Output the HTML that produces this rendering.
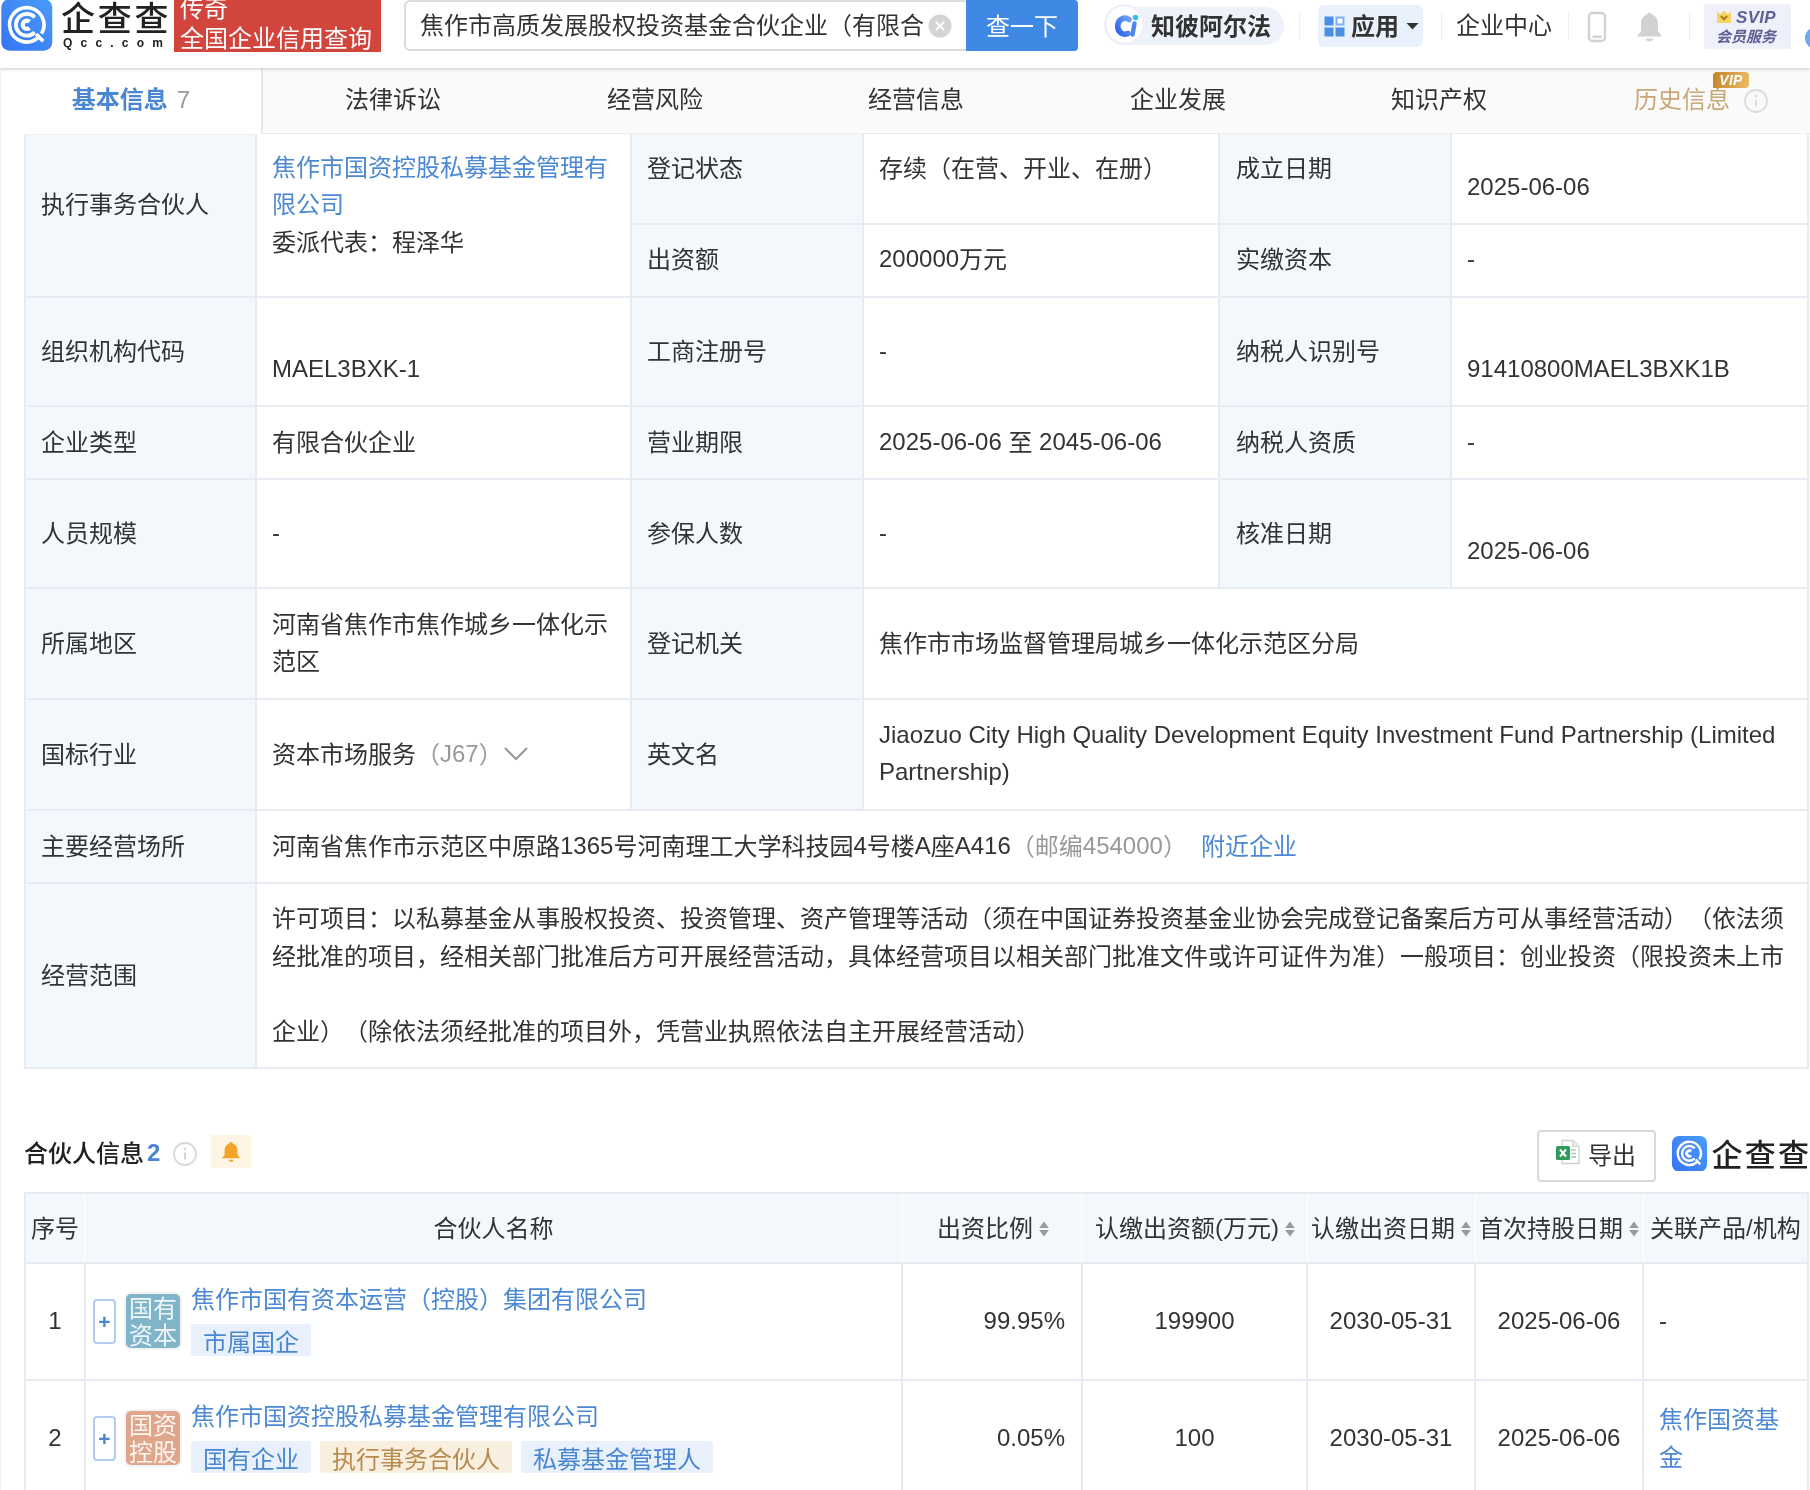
<!DOCTYPE html>
<html lang="zh-CN">
<head>
<meta charset="utf-8">
<title>企查查</title>
<style>
*{box-sizing:border-box;margin:0;padding:0}
html,body{width:1810px;height:1490px;overflow:hidden;background:#fff}
body{position:relative;will-change:transform;text-spacing-trim:space-all;font-family:"Liberation Sans","Noto Sans CJK SC",sans-serif;font-size:24px;color:#333;line-height:38px}
.abs{position:absolute}
a{color:#4c88d3;text-decoration:none}
.blue{color:#4a85d0}
.gray{color:#999}
/* main table cells */
.c{position:absolute;display:flex;align-items:center;padding-left:15px;border-right:2px solid #e3edf5;border-bottom:2px solid #e3edf5;white-space:nowrap}
.l{background:#f2f8fd}
.v{background:#fff}
#t1{position:absolute;left:0;top:0}
.lb{position:absolute;background:#f3f8fd}
.ln{position:absolute;background:#e8ecf2}
.t{position:absolute;white-space:nowrap;font-size:24px;line-height:38px;color:#333}
.tab{position:absolute;top:13px;width:262px;text-align:center;font-size:24px;line-height:38px;color:#333;white-space:nowrap}
.e{position:relative;top:-1px}
</style>
</head>
<body>
<!-- HEADER -->
<div id="hdr" class="abs" style="left:0;top:0;width:1810px;height:68px;background:#fff;box-shadow:0 1px 3px rgba(0,0,0,.22);z-index:5;overflow:hidden">
  <!-- logo icon -->
  <svg class="abs" style="left:1px;top:0px" width="52" height="52" viewBox="0 0 52 52">
    <defs><linearGradient id="lg1" x1="0" y1="1" x2="1" y2="0"><stop offset="0" stop-color="#3574f5"/><stop offset="1" stop-color="#4a9cf8"/></linearGradient></defs>
    <rect x="0.300" y="-1" width="51" height="51.700" rx="8.500" fill="url(#lg1)"/>
    <path d="M40.54 33.66 A17.2 17.2 0 1 0 36.86 37.98" fill="none" stroke="#fff" stroke-width="3.600"/>
    <path d="M33.77 17.37 A10.9 10.9 0 1 0 33.64 32.37" fill="none" stroke="#fff" stroke-width="3.800"/>
    <path d="M28.54 21.75 A4.1 4.1 0 1 0 28.54 27.85" fill="none" stroke="#fff" stroke-width="4.200"/>
    <path d="M35.13 34.13 L42.20 41.20" stroke="#fff" stroke-width="3.600"/>
  </svg>
  <div class="abs" style="left:61px;top:-5px;font-size:34px;line-height:48px;font-weight:500;color:#222;letter-spacing:2.800px;white-space:nowrap">企查查</div>
  <div class="abs" style="left:63px;top:34px;font-size:12px;line-height:18px;font-weight:700;color:#222;letter-spacing:8.200px;white-space:nowrap">Qcc.com</div>
  <div class="abs" style="left:174px;top:0;width:207px;height:52px;background:#d1453d"></div>
  <div class="abs" style="left:180px;top:-10px;font-size:24px;line-height:38px;color:#fff;white-space:nowrap">传奇</div>
  <div class="abs" style="left:180px;top:19.500px;font-size:24px;line-height:38px;color:#fff;white-space:nowrap">全国企业信用查询</div>
  <!-- search -->
  <div class="abs" style="left:404px;top:0px;width:566px;height:51px;border:2px solid #dcdcdc;border-radius:6px;background:#fff"></div>
  <div class="abs" style="left:420px;top:7px;font-size:24px;line-height:38px;color:#333;white-space:nowrap">焦作市高质发展股权投资基金合伙企业（有限合</div>
  <svg class="abs" style="left:928px;top:14px" width="24" height="24" viewBox="0 0 24 24"><circle cx="12" cy="12" r="11.5" fill="#d4d4d4"/><path d="M8 8 L16 16 M16 8 L8 16" stroke="#fff" stroke-width="2"/></svg>
  <div class="abs" style="left:966px;top:0;width:112px;height:51px;background:#3f88e3;border-radius:0 4px 4px 0;color:#fff;font-size:24px;line-height:54px;text-align:center">查一下</div>
  <!-- alpha pill -->
  <div class="abs" style="left:1106px;top:7px;width:178px;height:38px;border-radius:19px;background:#edf2fb"></div>
  <svg class="abs" style="left:1104px;top:3px" width="44" height="46" viewBox="0 0 44 46">
    <defs><linearGradient id="lg2" x1="0" y1="1" x2="1" y2="0"><stop offset="0" stop-color="#2d62e6"/><stop offset="1" stop-color="#6fa2f5"/></linearGradient></defs>
    <circle cx="20.500" cy="21.600" r="19.300" fill="#fff" stroke="#f1effa" stroke-width="2.600"/>
    <path d="M25 16.500 A7.300 8 0 1 0 24 30.500" fill="none" stroke="url(#lg2)" stroke-width="5.600" stroke-linecap="round"/>
    <path d="M30.500 20.500 L28.500 31.500" stroke="#4d86ef" stroke-width="4.400" stroke-linecap="round"/>
    <circle cx="31.500" cy="14.500" r="2.800" fill="#35c4e8"/>
  </svg>
  <div class="abs" style="left:1151px;top:7.500px;font-size:24px;line-height:38px;font-weight:700;color:#333;white-space:nowrap">知彼阿尔法</div>
  <div class="abs" style="left:1299px;top:12px;width:1px;height:28px;background:#eee"></div>
  <!-- apps -->
  <div class="abs" style="left:1318px;top:5px;width:105px;height:42px;border-radius:6px;background:#e9f1fc"></div>
  <svg class="abs" style="left:1324px;top:16px" width="22" height="21" viewBox="0 0 22 21"><rect x="0.5" y="0.5" width="9" height="9" fill="#4a8fe6"/><rect x="12.5" y="1.5" width="7" height="7" fill="#fff" stroke="#7fb0ee" stroke-width="2"/><rect x="0.5" y="11.5" width="9" height="9" fill="#4a8fe6"/><rect x="11.5" y="11.5" width="9" height="9" fill="#4a8fe6"/></svg>
  <div class="abs" style="left:1351px;top:7.500px;font-size:24px;line-height:38px;font-weight:700;color:#333;white-space:nowrap">应用</div>
  <svg class="abs" style="left:1406px;top:23px" width="13" height="7" viewBox="0 0 13 7"><path d="M0.5 0 L12.5 0 L6.5 6.5 Z" fill="#333"/></svg>
  <div class="abs" style="left:1441px;top:12px;width:1px;height:28px;background:#eee"></div>
  <div class="abs" style="left:1456px;top:7px;font-size:24px;line-height:38px;color:#333;white-space:nowrap">企业中心</div>
  <div class="abs" style="left:1568px;top:12px;width:1px;height:28px;background:#eee"></div>
  <!-- phone -->
  <svg class="abs" style="left:1587px;top:11px" width="20" height="32" viewBox="0 0 20 32"><rect x="2" y="2" width="16" height="28" rx="3.5" fill="none" stroke="#d2d2d2" stroke-width="2.4"/><rect x="5.500" y="24.500" width="9" height="2.600" fill="#d2d2d2"/></svg>
  <!-- bell -->
  <svg class="abs" style="left:1636px;top:11px" width="27" height="32" viewBox="0 0 27 32"><path d="M13.5 1.5 C15 1.5 15.8 2.5 15.8 3.6 C20 5 22 8.5 22 13 L22 20 L26 25.5 L1 25.5 L5 20 L5 13 C5 8.5 7 5 11.2 3.6 C11.2 2.5 12 1.5 13.5 1.5 Z" fill="#d2d2d2"/><path d="M10 27.5 L17 27.5 C17 29.5 15.5 30.5 13.5 30.5 C11.5 30.5 10 29.5 10 27.5 Z" fill="#d2d2d2"/></svg>
  <div class="abs" style="left:1689px;top:12px;width:1px;height:28px;background:#eee"></div>
  <!-- svip -->
  <div class="abs" style="left:1704px;top:4px;width:87px;height:45px;background:#eef1fa;border-radius:2px"></div>
  <svg class="abs" style="left:1716px;top:10px" width="16" height="14" viewBox="0 0 16 14"><path d="M1 2 L4.5 4 L8 0.5 L11.5 4 L15 2 L15 13 L1 13 Z" fill="#f6d662"/><path d="M4.8 6 L8 9.3 L11.2 6" fill="none" stroke="#b07a14" stroke-width="2"/></svg>
  <div class="abs" style="left:1736px;top:8px;font-size:17px;line-height:20px;font-weight:700;font-style:italic;color:#5d6193;white-space:nowrap;letter-spacing:0.3px">SVIP</div>
  <div class="abs" style="left:1716px;top:27px;font-size:15px;line-height:20px;font-weight:700;font-style:italic;color:#5d6193;white-space:nowrap">会员服务</div>
  <div class="abs" style="left:1805px;top:27px;width:22px;height:22px;border-radius:11px;background:#6ea8f2"></div>
</div>
<!-- TABS -->
<div id="tabs" class="abs" style="left:0;top:68px;width:1810px;height:66px;background:linear-gradient(#fafafa 0,#fafafa 64px,#fff 64px,#fff 65px,#ebebeb 65px)">
  <div class="abs" style="left:0;top:0;width:263px;height:66px;background:#fff;border-right:2px solid #e9e9e9"></div>
  <div class="tab" style="left:0;font-weight:700;color:#4a86d2">基本信息<span style="font-weight:400;color:#999;margin-left:9px">7</span></div>
  <div class="tab" style="left:262px">法律诉讼</div>
  <div class="tab" style="left:524px">经营风险</div>
  <div class="tab" style="left:785px">经营信息</div>
  <div class="tab" style="left:1047px">企业发展</div>
  <div class="tab" style="left:1308px">知识产权</div>
  <div class="tab" style="left:1551px;color:#c9a876">历史信息</div>
  <div class="abs" style="left:1713px;top:4px;width:36px;height:16px;border-radius:4px 4px 4px 0;background:linear-gradient(100deg,#c4852a,#ecbb62);color:#fff;font-size:14px;line-height:16px;font-weight:700;font-style:italic;text-align:center;letter-spacing:.3px">VIP</div>
  <svg class="abs" style="left:1743px;top:20px" width="26" height="26" viewBox="0 0 26 26"><circle cx="13" cy="13" r="11" fill="none" stroke="#dcdcdc" stroke-width="1.8"/><circle cx="13" cy="8" r="1.3" fill="#dcdcdc"/><path d="M13 11.5 L13 18.5" stroke="#dcdcdc" stroke-width="1.8"/></svg>
</div>
<div class="abs" style="left:0;top:69px;width:1px;height:1421px;background:#f3f3f3"></div>
<!-- TABLE 1 -->
<div id="t1">
<div class="lb" style="left:24px;top:134px;width:231px;height:935px"></div>
<div class="lb" style="left:630px;top:134px;width:232px;height:675px"></div>
<div class="lb" style="left:1218px;top:134px;width:232px;height:453px"></div>
<div class="ln" style="left:24px;top:134px;width:233px;height:1px;opacity:.7"></div>
<div class="ln" style="left:24px;top:296px;width:1785px;height:2px"></div>
<div class="ln" style="left:24px;top:405px;width:1785px;height:2px"></div>
<div class="ln" style="left:24px;top:478px;width:1785px;height:2px"></div>
<div class="ln" style="left:24px;top:587px;width:1785px;height:2px"></div>
<div class="ln" style="left:24px;top:698px;width:1785px;height:2px"></div>
<div class="ln" style="left:24px;top:809px;width:1785px;height:2px"></div>
<div class="ln" style="left:24px;top:882px;width:1785px;height:2px"></div>
<div class="ln" style="left:24px;top:1067px;width:1785px;height:2px"></div>
<div class="ln" style="left:632px;top:223px;width:1177px;height:2px"></div>
<div class="ln" style="left:24px;top:134px;width:2px;height:935px"></div>
<div class="ln" style="left:1807px;top:134px;width:2px;height:935px"></div>
<div class="ln" style="left:255px;top:134px;width:2px;height:935px"></div>
<div class="ln" style="left:630px;top:134px;width:2px;height:675px"></div>
<div class="ln" style="left:862px;top:134px;width:2px;height:675px"></div>
<div class="ln" style="left:1218px;top:134px;width:2px;height:453px"></div>
<div class="ln" style="left:1450px;top:134px;width:2px;height:453px"></div>
<div class="t" style="left:41px;top:186px">执行事务合伙人</div>
<div class="t" style="left:272px;top:149px"><a>焦作市国资控股私募基金管理有</a></div>
<div class="t" style="left:272px;top:186px"><a>限公司</a></div>
<div class="t" style="left:272px;top:224px">委派代表：程泽华</div>
<div class="t" style="left:647px;top:150px">登记状态</div>
<div class="t" style="left:879px;top:150px">存续（在营、开业、在册）</div>
<div class="t" style="left:1236px;top:150px">成立日期</div>
<div class="t" style="left:1467px;top:168px">2025-06-06</div>
<div class="t" style="left:647px;top:241px">出资额</div>
<div class="t" style="left:879px;top:241px"><span class="e">200000</span>万元</div>
<div class="t" style="left:1236px;top:241px">实缴资本</div>
<div class="t" style="left:1467px;top:240px">-</div>
<div class="t" style="left:41px;top:333px">组织机构代码</div>
<div class="t" style="left:272px;top:350px">MAEL3BXK-1</div>
<div class="t" style="left:647px;top:333px">工商注册号</div>
<div class="t" style="left:879px;top:332px">-</div>
<div class="t" style="left:1236px;top:333px">纳税人识别号</div>
<div class="t" style="left:1467px;top:350px">91410800MAEL3BXK1B</div>
<div class="t" style="left:41px;top:424px">企业类型</div>
<div class="t" style="left:272px;top:424px">有限合伙企业</div>
<div class="t" style="left:647px;top:424px">营业期限</div>
<div class="t" style="left:879px;top:424px"><span class="e">2025-06-06</span> 至 <span class="e">2045-06-06</span></div>
<div class="t" style="left:1236px;top:424px">纳税人资质</div>
<div class="t" style="left:1467px;top:423px">-</div>
<div class="t" style="left:41px;top:515px">人员规模</div>
<div class="t" style="left:272px;top:514px">-</div>
<div class="t" style="left:647px;top:515px">参保人数</div>
<div class="t" style="left:879px;top:514px">-</div>
<div class="t" style="left:1236px;top:515px">核准日期</div>
<div class="t" style="left:1467px;top:532px">2025-06-06</div>
<div class="t" style="left:41px;top:625px">所属地区</div>
<div class="t" style="left:272px;top:606px">河南省焦作市焦作城乡一体化示</div>
<div class="t" style="left:272px;top:643px">范区</div>
<div class="t" style="left:647px;top:625px">登记机关</div>
<div class="t" style="left:879px;top:625px">焦作市市场监督管理局城乡一体化示范区分局</div>
<div class="t" style="left:41px;top:736px">国标行业</div>
<div class="t" style="left:272px;top:736px">资本市场服务<span class="gray">（<span class="e">J67</span>）</span></div>
<div class="t" style="left:647px;top:736px">英文名</div>
<div class="t" style="left:879px;top:716px">Jiaozuo City High Quality Development Equity Investment Fund Partnership (Limited</div>
<div class="t" style="left:879px;top:753px">Partnership)</div>
<div class="t" style="left:41px;top:828px">主要经营场所</div>
<div class="t" style="left:272px;top:828px">河南省焦作市示范区中原路<span class="e">1365</span>号河南理工大学科技园<span class="e">4</span>号楼<span class="e">A</span>座<span class="e">A416</span><span class="gray">（邮编<span class="e">454000</span>）</span><a style="margin-left:14px">附近企业</a></div>
<div class="t" style="left:41px;top:957px">经营范围</div>
<div class="t" style="left:272px;top:900px">许可项目：以私募基金从事股权投资、投资管理、资产管理等活动（须在中国证券投资基金业协会完成登记备案后方可从事经营活动）（依法须</div>
<div class="t" style="left:272px;top:938px">经批准的项目，经相关部门批准后方可开展经营活动，具体经营项目以相关部门批准文件或许可证件为准）一般项目：创业投资（限投资未上市</div>
<div class="t" style="left:272px;top:1013px">企业）（除依法须经批准的项目外，凭营业执照依法自主开展经营活动）</div>
<svg class="abs" style="left:503px;top:746px" width="26" height="16" viewBox="0 0 26 16"><path d="M2 2 L13 13 L24 2" fill="none" stroke="#999" stroke-width="2.2"/></svg>
</div>
<!-- SECTION 2 -->
<div id="s2">
<div class="t" style="left:24px;top:1134.5px;font-weight:500;color:#222">合伙人信息<span class="e" style="color:#4a86d2;margin-left:3px;font-weight:700">2</span></div>
<svg class="abs" style="left:172px;top:1141px" width="26" height="26" viewBox="0 0 26 26"><circle cx="13" cy="13" r="11" fill="none" stroke="#d8d8d8" stroke-width="1.8"/><circle cx="13" cy="8" r="1.3" fill="#d0d0d0"/><path d="M13 11.5 L13 18.5" stroke="#d0d0d0" stroke-width="1.8"/></svg>
<div class="abs" style="left:211px;top:1135px;width:40px;height:33px;border-radius:1px;background:#fdf4e4"></div>
<svg class="abs" style="left:221px;top:1141px" width="20" height="22" viewBox="0 0 22 24"><path d="M11 1 C12.3 1 13 1.8 13 2.8 C16.5 3.8 18 6.5 18 10 L18 15 L21 19 L1 19 L4 15 L4 10 C4 6.500 5.500 3.800 9 2.800 C9 1.800 9.700 1 11 1 Z" fill="#f5a42a"/><path d="M8.300 20.500 L13.700 20.500 C13.700 22 12.500 22.800 11 22.800 C9.500 22.800 8.300 22 8.300 20.500 Z" fill="#f5a42a"/></svg>
<div class="abs" style="left:1537px;top:1129.500px;width:119px;height:52px;border:2px solid #d8d8d8;border-radius:4px;background:#fff"></div>
<svg class="abs" style="left:1554.500px;top:1139px" width="26" height="26" viewBox="0 0 26 26"><path d="M7 1.500 L18 1.500 L24 7.500 L24 24.500 L7 24.500 Z" fill="#fff" stroke="#cfcfcf" stroke-width="1.300"/><path d="M18 1.500 L18 7.500 L24 7.500" fill="#eee" stroke="#cfcfcf" stroke-width="1.200"/><path d="M16 11 H21 M16 14.500 H21 M16 18 H21" stroke="#9fcfb0" stroke-width="1.400"/><rect x="1" y="7" width="14" height="14" rx="1.500" fill="#2e9b5a"/><path d="M5 10.500 L11 17.500 M11 10.500 L5 17.500" stroke="#fff" stroke-width="2"/></svg>
<div class="t" style="left:1588px;top:1136.5px;">导出</div>
<svg class="abs" style="left:1671.500px;top:1135.500px" width="35" height="35.500" viewBox="0 0 52 52.700"><rect x="0" y="0" width="52" height="52.700" rx="10" fill="url(#lg1)"/><path d="M40.54 34.66 A17.2 17.2 0 1 0 36.86 38.98" fill="none" stroke="#fff" stroke-width="3.600"/><path d="M33.77 18.37 A10.9 10.9 0 1 0 33.64 33.37" fill="none" stroke="#fff" stroke-width="3.800"/><path d="M28.54 22.75 A4.1 4.1 0 1 0 28.54 28.85" fill="none" stroke="#fff" stroke-width="4.200"/><path d="M35.13 35.13 L42.20 42.20" stroke="#fff" stroke-width="3.600"/></svg>
<div class="abs" style="left:1711.500px;top:1131.500px;font-size:31px;line-height:48px;font-weight:500;color:#222;letter-spacing:2.300px;white-space:nowrap">企查查</div>
<div class="lb" style="left:24px;top:1192px;width:1785px;height:72px"></div>
<div class="ln" style="left:24px;top:1192px;width:1785px;height:2px"></div>
<div class="ln" style="left:24px;top:1262px;width:1785px;height:2px"></div>
<div class="ln" style="left:24px;top:1379px;width:1785px;height:2px"></div>
<div class="ln" style="left:24px;top:1192px;width:2px;height:300px"></div>
<div class="ln" style="left:1807px;top:1192px;width:2px;height:300px"></div>
<div class="abs" style="left:84px;top:1194px;width:2px;height:68px;background:rgba(255,255,255,.5)"></div><div class="abs" style="left:901px;top:1194px;width:2px;height:68px;background:rgba(255,255,255,.5)"></div><div class="abs" style="left:1081px;top:1194px;width:2px;height:68px;background:rgba(255,255,255,.5)"></div><div class="abs" style="left:1306px;top:1194px;width:2px;height:68px;background:rgba(255,255,255,.5)"></div><div class="abs" style="left:1474px;top:1194px;width:2px;height:68px;background:rgba(255,255,255,.5)"></div><div class="abs" style="left:1642px;top:1194px;width:2px;height:68px;background:rgba(255,255,255,.5)"></div>
<div class="ln" style="left:84px;top:1263px;width:2px;height:230px"></div>
<div class="ln" style="left:901px;top:1263px;width:2px;height:230px"></div>
<div class="ln" style="left:1081px;top:1263px;width:2px;height:230px"></div>
<div class="ln" style="left:1306px;top:1263px;width:2px;height:230px"></div>
<div class="ln" style="left:1474px;top:1263px;width:2px;height:230px"></div>
<div class="ln" style="left:1642px;top:1263px;width:2px;height:230px"></div>
<div class="t" style="left:31px;top:1209.5px;">序号</div>
<div class="t" style="left:86px;width:815px;text-align:center;top:1209.5px;">合伙人名称</div>
<div class="t" style="left:937px;top:1209.5px;">出资比例<svg style="display:inline-block;vertical-align:middle;margin-left:6px;margin-top:-3px" width="10" height="16" viewBox="0 0 10 16"><path d="M5 0.500 L9.800 7 L0.200 7 Z M5 15.500 L9.800 9 L0.200 9 Z" fill="#9a9a9a"/></svg></div>
<div class="t" style="left:1095px;top:1209.5px;">认缴出资额<span class="e">(</span>万元<span class="e">)</span><svg style="display:inline-block;vertical-align:middle;margin-left:6px;margin-top:-3px" width="10" height="16" viewBox="0 0 10 16"><path d="M5 0.500 L9.800 7 L0.200 7 Z M5 15.500 L9.800 9 L0.200 9 Z" fill="#9a9a9a"/></svg></div>
<div class="t" style="left:1311px;top:1209.5px;">认缴出资日期<svg style="display:inline-block;vertical-align:middle;margin-left:6px;margin-top:-3px" width="10" height="16" viewBox="0 0 10 16"><path d="M5 0.500 L9.800 7 L0.200 7 Z M5 15.500 L9.800 9 L0.200 9 Z" fill="#9a9a9a"/></svg></div>
<div class="t" style="left:1479px;top:1209.5px;">首次持股日期<svg style="display:inline-block;vertical-align:middle;margin-left:6px;margin-top:-3px" width="10" height="16" viewBox="0 0 10 16"><path d="M5 0.500 L9.800 7 L0.200 7 Z M5 15.500 L9.800 9 L0.200 9 Z" fill="#9a9a9a"/></svg></div>
<div class="t" style="left:1650px;top:1209.5px;">关联产品<span class="e">/</span>机构</div>
<div class="t" style="left:26px;width:58px;text-align:center;top:1302px;">1</div>
<div class="abs" style="left:93px;top:1299px;width:23px;height:45px;border:2px solid #b0cdf0;border-radius:4px;background:#fff;color:#4a86d2;font-size:21px;font-weight:700;line-height:41px;text-align:center">+</div>
<div class="abs" style="left:124px;top:1292px;width:58px;height:58px;border-radius:7px;background:#80b5c9;border:2px solid #f1f3f5;color:rgba(255,255,255,.88);font-size:24px;line-height:27px;text-align:center;padding-top:1px">国有<br>资本</div>
<div class="t" style="left:191px;top:1280.5px;"><a>焦作市国有资本运营（控股）集团有限公司</a></div>
<div class="abs" style="left:191px;top:1324px;width:120px;height:32px;border-radius:3px;background:#e7f0fb;color:#4a86d2;font-size:24px;line-height:38px;text-align:center;white-space:nowrap">市属国企</div>
<div class="t" style="left:903px;width:162px;text-align:right;top:1302px">99.95%</div>
<div class="t" style="left:1083px;width:223px;text-align:center;top:1302px;">199900</div>
<div class="t" style="left:1308px;width:166px;text-align:center;top:1302px;">2030-05-31</div>
<div class="t" style="left:1476px;width:166px;text-align:center;top:1302px;">2025-06-06</div>
<div class="t" style="left:1659px;top:1302px;">-</div>
<div class="t" style="left:26px;width:58px;text-align:center;top:1419px;">2</div>
<div class="abs" style="left:93px;top:1416px;width:23px;height:45px;border:2px solid #b0cdf0;border-radius:4px;background:#fff;color:#4a86d2;font-size:21px;font-weight:700;line-height:41px;text-align:center">+</div>
<div class="abs" style="left:124px;top:1409px;width:58px;height:58px;border-radius:7px;background:#e0a68c;border:2px solid #f1f3f5;color:rgba(255,255,255,.88);font-size:24px;line-height:27px;text-align:center;padding-top:1px">国资<br>控股</div>
<div class="t" style="left:191px;top:1397.5px;"><a>焦作市国资控股私募基金管理有限公司</a></div>
<div class="abs" style="left:191px;top:1441px;width:120px;height:32px;border-radius:3px;background:#e7f0fb;color:#4a86d2;font-size:24px;line-height:38px;text-align:center;white-space:nowrap">国有企业</div>
<div class="abs" style="left:320px;top:1441px;width:192px;height:32px;border-radius:3px;background:#f8efe1;color:#b98b4d;font-size:24px;line-height:38px;text-align:center;white-space:nowrap">执行事务合伙人</div>
<div class="abs" style="left:521px;top:1441px;width:192px;height:32px;border-radius:3px;background:#e7f0fb;color:#4a86d2;font-size:24px;line-height:38px;text-align:center;white-space:nowrap">私募基金管理人</div>
<div class="t" style="left:903px;width:162px;text-align:right;top:1419px">0.05%</div>
<div class="t" style="left:1083px;width:223px;text-align:center;top:1419px;">100</div>
<div class="t" style="left:1308px;width:166px;text-align:center;top:1419px;">2030-05-31</div>
<div class="t" style="left:1476px;width:166px;text-align:center;top:1419px;">2025-06-06</div>
<div class="t" style="left:1659px;top:1401px;"><a>焦作国资基</a></div>
<div class="t" style="left:1659px;top:1439px;"><a>金</a></div>
</div>
</body>
</html>
